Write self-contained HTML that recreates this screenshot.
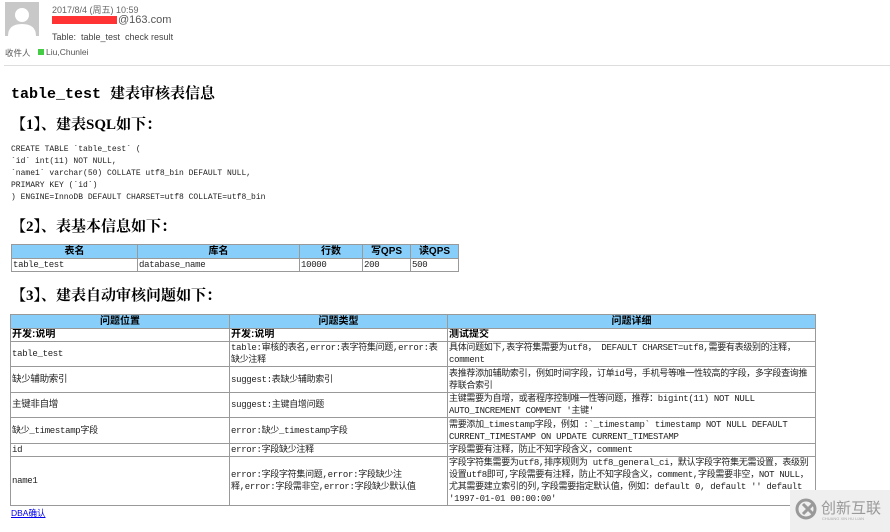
<!DOCTYPE html>
<html><head><meta charset="utf-8"><style>
*{margin:0;padding:0;box-sizing:border-box}
body{width:890px;height:532px;background:#fff;position:relative;overflow:hidden;font-family:"Liberation Sans","Noto Sans CJK SC",sans-serif;color:#000}
.a{position:absolute;white-space:nowrap}
.m{font-family:"Liberation Mono","Noto Sans CJK SC",monospace;font-size:8px;color:#222}
.h{font-family:"Liberation Serif","Noto Serif CJK SC",serif;font-weight:bold;font-size:15px}
table{position:absolute;border-collapse:collapse;table-layout:fixed}
td{border:1px solid #999;font-family:"Liberation Mono","Noto Sans CJK SC",monospace;font-size:9px;line-height:12px;vertical-align:middle;padding:0 1px;overflow:hidden;color:#222;letter-spacing:-0.3px}
td.c{font-size:9.5px;font-family:"Liberation Sans","Noto Sans CJK SC",sans-serif}
tr.hd td{background:#87cefa;text-align:center;font-weight:bold;font-size:10px;font-family:"Liberation Sans","Noto Sans CJK SC",sans-serif;color:#000;letter-spacing:0}
tr.sb td{font-weight:bold;font-size:10px;font-family:"Liberation Sans","Noto Sans CJK SC",sans-serif;color:#000;letter-spacing:0}
</style></head><body>
<div class="a" style="left:5px;top:2px;width:34px;height:34px;background:#c8c8c8;overflow:hidden">
<svg width="34" height="34"><circle cx="17" cy="13" r="7" fill="#fff"/><path d="M3 34 Q3 22 17 22 Q31 22 31 34Z" fill="#fff"/></svg></div>
<div class="a" style="left:52px;top:3px;font-size:9px;color:#666">2017/8/4 (周五) 10:59</div>
<div class="a" style="left:52px;top:16px;width:65px;height:8px;background:#f33"></div>
<div class="a" style="left:118px;top:14px;font-size:11px;color:#555">@163.com</div>
<div class="a" style="left:52px;top:32px;font-size:9px;color:#444">Table:&nbsp; table_test&nbsp; check result</div>
<div class="a" style="left:5px;top:47px;font-size:8.5px;color:#555">收件人</div>
<div class="a" style="left:38px;top:49px;width:6px;height:6px;background:#4c4"></div>
<div class="a" style="left:46px;top:47px;font-size:8.5px;color:#555">Liu,Chunlei</div>
<div class="a" style="left:4px;top:65px;width:886px;height:1px;background:#ddd"></div>

<div class="a h" style="left:11px;top:82px;font-family:'Liberation Mono','Noto Serif CJK SC',monospace">table_test 建表审核表信息</div>
<div class="a h" style="left:11px;top:113px">【1】、建表SQL如下：</div>
<div class="a m" style="left:11px;top:144px;line-height:12px">CREATE TABLE `table_test` (<br>`id` int(11) NOT NULL,<br>`name1` varchar(50) COLLATE utf8_bin DEFAULT NULL,<br>PRIMARY KEY (`id`)<br>) ENGINE=InnoDB DEFAULT CHARSET=utf8 COLLATE=utf8_bin</div>
<div class="a h" style="left:11px;top:215px">【2】、表基本信息如下：</div>
<table style="left:11px;top:244px;width:447px">
<colgroup><col style="width:126px"><col style="width:162px"><col style="width:63px"><col style="width:48px"><col style="width:48px"></colgroup>
<tr class="hd" style="height:14px"><td>表名</td><td>库名</td><td>行数</td><td>写QPS</td><td>读QPS</td></tr>
<tr style="height:13px"><td>table_test</td><td>database_name</td><td>10000</td><td>200</td><td>500</td></tr>
</table>
<div class="a h" style="left:11px;top:284px">【3】、建表自动审核问题如下：</div>
<table style="left:10px;top:314px;width:805px">
<colgroup><col style="width:219px"><col style="width:218px"><col style="width:368px"></colgroup>
<tr class="hd" style="height:14px"><td>问题位置</td><td>问题类型</td><td>问题详细</td></tr>
<tr class="sb" style="height:13px"><td>开发:说明</td><td>开发:说明</td><td>测试提交</td></tr>
<tr style="height:25px"><td>table_test</td><td>table:审核的表名,error:表字符集问题,error:表缺少注释</td><td>具体问题如下,表字符集需要为utf8， DEFAULT CHARSET=utf8,需要有表级别的注释，comment</td></tr>
<tr style="height:26px"><td class="c">缺少辅助索引</td><td>suggest:表缺少辅助索引</td><td>表推荐添加辅助索引，例如时间字段，订单id号，手机号等唯一性较高的字段，多字段查询推荐联合索引</td></tr>
<tr style="height:25px"><td class="c">主键非自增</td><td>suggest:主键自增问题</td><td>主键需要为自增，或者程序控制唯一性等问题，推荐：bigint(11) NOT NULL AUTO_INCREMENT COMMENT '主键'</td></tr>
<tr style="height:26px"><td>缺少_timestamp字段</td><td>error:缺少_timestamp字段</td><td>需要添加_timestamp字段，例如 :`_timestamp` timestamp NOT NULL DEFAULT CURRENT_TIMESTAMP ON UPDATE CURRENT_TIMESTAMP</td></tr>
<tr style="height:13px"><td>id</td><td>error:字段缺少注释</td><td>字段需要有注释，防止不知字段含义，comment</td></tr>
<tr style="height:49px"><td>name1</td><td>error:字段字符集问题,error:字段缺少注释,error:字段需非空,error:字段缺少默认值</td><td>字段字符集需要为utf8,排序规则为 utf8_general_ci，默认字段字符集无需设置，表级别设置utf8即可,字段需要有注释，防止不知字段含义，comment,字段需要非空，NOT NULL，尤其需要建立索引的列,字段需要指定默认值，例如：default 0, default '' default '1997-01-01 00:00:00'</td></tr>
</table>
<div class="a" style="left:11px;top:507px;font-size:8.5px;color:#00e;text-decoration:underline">DBA确认</div>
<div class="a" style="left:790px;top:490px;width:100px;height:42px;background:#efefef"></div>
<svg class="a" style="left:795px;top:498px" width="24" height="22"><circle cx="11" cy="11" r="9" fill="none" stroke="#999" stroke-width="3"/><path d="M8 6 L18 16 M18 6 L8 16" stroke="#999" stroke-width="3"/></svg>
<div class="a" style="left:821px;top:497px;font-size:15px;color:#999">创新互联</div>
<div class="a" style="left:822px;top:516px;font-size:4px;color:#aaa">CHUANG XIN HU LIAN</div>
</body></html>
